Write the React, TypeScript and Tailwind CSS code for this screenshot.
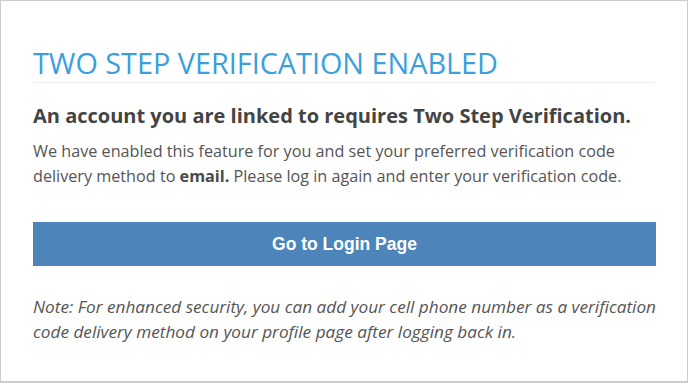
export default function App() {
  return (
    <div className="w-[688px] h-[384px] bg-white">
      <div
        className="h-[383px] border border-[#cccccc] border-b-2 bg-white px-[32px] pt-[44px]"
        style={{ fontFamily: '"Open Sans", sans-serif' }}
      >
        <h1 className="text-[28.8px] leading-[36px] font-medium text-[#3b9fdd] border-b border-[#eeeeee] pb-[1px] whitespace-nowrap">
          TWO STEP VERIFICATION ENABLED
        </h1>
        <p className="mt-[20px] text-[20px] leading-[26px] font-bold text-[#444444] whitespace-nowrap">
          An account you are linked to requires Two Step Verification.
        </p>
        <p className="mt-[10px] text-[16.2px] leading-[25px] text-[#555555] whitespace-nowrap">
          We have enabled this feature for you and set your preferred verification code
          <br />
          delivery method to <b className="font-bold text-[#4a4a4a]">email.</b> Please log in again and enter your verification code.
        </p>
        <button
          className="mt-[33px] w-[623px] h-[44px] bg-[#4d84ba] text-white text-[17.5px] font-bold flex items-center justify-center"
          style={{ fontFamily: '"Liberation Sans", Arial, sans-serif' }}
        >
          Go to Login Page
        </button>
        <p className="mt-[28px] text-[17.2px] leading-[25px] italic text-[#555555] whitespace-nowrap">
          Note: For enhanced security, you can add your cell phone number as a verification
          <br />
          code delivery method on your profile page after logging back in.
        </p>
      </div>
    </div>
  );
}
